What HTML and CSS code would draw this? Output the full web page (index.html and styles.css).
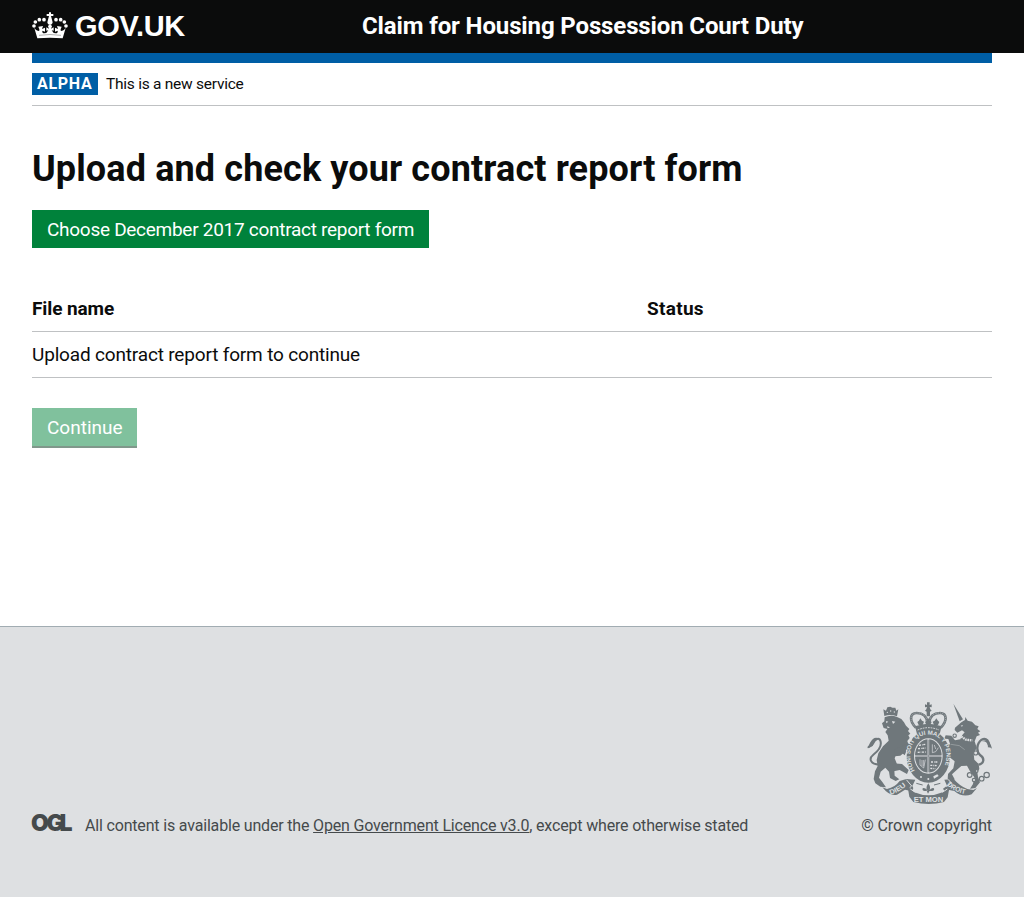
FILE: index.html
```html
<!DOCTYPE html>
<html lang="en">
<head>
<meta charset="utf-8">
<title>Claim for Housing Possession Court Duty</title>
<link rel="stylesheet" href="styles.css">
</head>
<body>
<header class="header">
  <div class="container header-inner">
    <div class="logo">
      <svg class="crown" viewBox="24 24 108 79" fill="#fff" aria-hidden="true">
        <circle cx="30" cy="65" r="5.5"/><circle cx="34" cy="53" r="5.5"/><circle cx="46" cy="46" r="5.5"/><circle cx="60" cy="46" r="5.5"/>
        <circle cx="96" cy="46" r="5.5"/><circle cx="110" cy="46" r="5.5"/><circle cx="121" cy="53" r="5.5"/><circle cx="126" cy="65" r="5.5"/>
        <path d="M75 24h6v5h7v6h-7l4 15c3 8-3 11-7 11s-10-3-7-11l4-15h-7v-6h7z"/>
        <circle cx="78" cy="65" r="5"/>
        <path d="M40 102 L31 71 Q36 79 43 80 Q48 80 46 75 L43 67 L57 65 L54 74 L63 70 L63 82 L55 79 Q54 87 61 87 Q69 87 73 78 L67 79 L67 69 L75 73 L72 65 H84 L81 73 L89 69 L89 79 L83 78 Q87 87 95 87 Q102 87 101 79 L93 82 L93 70 L102 74 L99 65 L113 67 L110 75 Q108 80 113 80 Q120 79 125 71 L116 102 Q78 98 40 102Z"/>
        <path d="M45 93Q78 88 111 93" fill="none" stroke="#0b0c0c" stroke-width="1"/>
      </svg>
      <span class="logo-text">GOV.UK</span>
    </div>
    <div class="service">Claim for Housing Possession Court Duty</div>
  </div>
</header>
<main class="container main">
  <div class="bar"></div>
  <div class="phase"><strong class="tag">ALPHA</strong><span class="phase-text">This is a new service</span></div>
  <h1 class="title">Upload and check your contract report form</h1>
  <button class="button choose"><span class="choose-text">Choose December 2017 contract report form</span></button>
  <div class="table">
    <div class="row head"><span class="file">File name</span><span class="status">Status</span></div>
    <div class="row"><span class="empty">Upload contract report form to continue</span></div>
  </div>
  <button class="button continue" disabled><span class="continue-text">Continue</span></button>
</main>
<footer class="footer">
  <div class="container footer-inner">
    <div class="licence">
      <svg class="ogl" viewBox="0 0 41 18" role="img" aria-label="OGL"><text class="ogl-text" x="-0.9 14.6 27.6" y="17">OGL</text></svg>
      <span class="licence-text">All content is available under the <a href="#">Open Government Licence v3.0</a>, except where otherwise stated</span>
    </div>
    <div class="copyright">
      <svg class="crest" viewBox="21 21 375 306" fill="#6f777b" stroke="#6f777b" stroke-width="0" aria-hidden="true">
        <!-- lion -->
        <path d="M73 63L70 43L78 47L82 37L91 35L97 38L106 38L109 47L115 43L111 64Q92 57 73 63Z"/>
        <g fill="#dee0e2"><circle cx="82" cy="52" r="2"/><circle cx="92" cy="48" r="2"/><circle cx="103" cy="51" r="2"/></g>
        <path d="M74 67Q92 58 111 66L124 72L132 82L138 92L148 102L144 108L151 116L145 121L149 129L142 138L146 151L133 158L139 169L134 181L122 170L109 177L104 190L112 210L103 226L104 242L118 253L107 258L90 249L87 230L76 218L62 230L57 248L67 261L78 277L61 275L46 265L41 252L45 229L53 213L50 195L55 175L69 154L86 137L83 121L76 111L82 102L71 99L66 85L73 79Z"/>
        <path d="M96 78l10 2-7 7zM78 78l7 2-6 5zM81 94l9 3-7 3z" fill="#dee0e2"/>
        <path d="M57 209C31 207 25 191 40 179C58 165 66 151 61 137C57 126 45 133 40 144C37 151 29 153 24 158" fill="none" stroke-width="6"/>
        <path d="M31 142Q40 124 54 129Q42 138 38 153L22 160Z"/>
        <path d="M105 163L132 151L144 143L150 151L132 173L121 182L104 184ZM98 205L126 207L146 225L141 237L119 225L101 229Z"/>
        <!-- unicorn -->
        <path d="M280 26L309 73L299 79Z"/>
        <path d="M304 82L315 75L316 66L323 77L336 80L346 91L356 94L352 102L361 109L354 113L360 120L350 124L344 139L350 158L341 176L343 194L356 207L358 222L352 232L354 246L360 262L346 279L330 281L339 267L343 247L330 229L321 212L304 213L290 225L276 238L284 253L278 259L263 251L264 237L280 220L284 199L269 187L265 171L253 160L258 145L271 149L265 132L253 131L257 121L274 122L285 136L301 133L307 120L314 112L306 106L292 113L284 105L285 98Z"/>
        <path d="M298 121L318 134L337 136" fill="none" stroke="#dee0e2" stroke-width="7" stroke-dasharray="5 2"/>
        <path d="M302 92l7-2-3 5z" fill="#dee0e2"/>
        <path d="M356 209C373 205 374 190 361 181C347 169 350 145 365 134C379 126 389 140 387 157" fill="none" stroke-width="7"/>
        <path d="M366 139Q388 127 396 161L384 152Q380 137 366 139Z"/>
        <path d="M273 148L298 152L314 164" fill="none" stroke="#dee0e2" stroke-width="1"/>
        <g fill="#dee0e2" stroke-width="3.5"><circle cx="284" cy="122" r="5"/><circle cx="329" cy="240" r="7"/><circle cx="342" cy="255" r="5"/><circle cx="365" cy="251" r="7"/><circle cx="380" cy="240" r="8"/><circle cx="347" cy="174" r="6"/><circle cx="350" cy="228" r="4"/></g>
        <!-- royal crown -->
        <path d="M166 96C148 78 148 54 170 53Q190 53 201 66H209Q220 53 240 53C262 54 262 78 244 96Z" fill="#dee0e2"/>
        <path d="M168 98C147 78 149 54 170 54C190 54 200 64 202 82M242 98C263 78 261 54 240 54C220 54 210 64 208 82" fill="none" stroke-width="8"/>
        <path d="M168 98C147 78 149 54 170 54C190 54 200 64 202 82M242 98C263 78 261 54 240 54C220 54 210 64 208 82" fill="none" stroke="#dee0e2" stroke-width="2" stroke-dasharray="2 3.5"/>
        <path d="M201 22h8v8l6-2v9l-6-1 2 7 4 4-5 3v14h-10V50l-5-3 4-4 2-7-6 1v-9l6 2z"/>
        <path d="M181 70l5 7 6 3-4 10h-12l-4-9 5-4zM229 70l5 7 4 4-4 9h-12l-4-10 6-3zM205 70l5 8 5 3-4 8h-12l-4-8 5-3z"/>
        <path d="M165 94Q205 78 245 94L239 117Q205 102 171 117Z"/>
        <path d="M173 105Q205 91 237 105" fill="none" stroke="#dee0e2" stroke-width="3" stroke-dasharray="5 3"/>
        <!-- shield and garter -->
        <ellipse cx="205" cy="184" rx="65" ry="79"/>
        <ellipse cx="205" cy="183" rx="43" ry="53" fill="#dee0e2"/>
        <ellipse cx="205" cy="183" rx="40" ry="50"/>
        <path d="M205 132V234M164 183H246" fill="none" stroke="#dee0e2" stroke-width="5"/>
        <path d="M205 134V232M166 183H244" fill="none" stroke-width="2"/>
        <path d="M177 151l19-3M174 161l23-2M173 172l24-1M213 201l20 0M211 211l21 1M211 220l15 1" fill="none" stroke="#dee0e2" stroke-width="4" stroke-dasharray="6 3 2 2"/>
        <path d="M217 148v25l10-3 8-12M223 150l4 12M180 193v17l11 9 5-25M186 195v18M191 195v19" fill="none" stroke="#dee0e2" stroke-width="2"/>
        <path id="motto" d="M165 228C137 187 150 119 205 119C260 119 273 187 245 228" fill="none"/>
        <text class="garter-text"><textPath href="#motto" textLength="264" lengthAdjust="spacingAndGlyphs" startOffset="1">HONI SOIT QUI MAL Y PENSE</textPath></text>
        <g fill="#dee0e2"><circle cx="183" cy="246" r="3"/><circle cx="205" cy="252" r="3"/><path d="M220 244l12-6 4 5-14 8z"/></g>
        <!-- ribbon and plant -->
        <path d="M67 277L81 282Q105 277 119 258L139 252L166 254L157 273Q164 283 153 288L135 284L111 299Q89 305 67 277ZM253 254L281 252Q299 273 322 282L340 285L351 279L335 298Q307 309 283 288L268 285L257 293L249 281L261 272Z"/>
        <path d="M143 275L163 292Q205 310 248 292L269 274L263 307L252 321Q207 333 160 321L148 305Z"/>
        <path d="M151 282L167 292M262 282L247 292M139 254L155 273L149 278M265 254L274 264L259 275" fill="none" stroke="#dee0e2" stroke-width="3"/>
        <path d="M168 263Q205 273 243 263L240 288Q205 304 171 288Z" fill="#dee0e2"/>
        <path d="M205 265Q194 280 204 296Q216 280 205 265ZM202 287Q185 291 188 280Q196 277 203 287ZM208 287Q225 291 222 280Q214 277 207 287Z"/>
        <path d="M169 265L188 270M241 265L222 270" fill="none" stroke-width="3"/>
        <text class="ribbon-text" x="161" y="320" textLength="89" lengthAdjust="spacingAndGlyphs">ET MON</text>
        <path id="dieu" d="M91 299Q121 292 143 267" fill="none"/><text class="ribbon-text"><textPath href="#dieu" textLength="55" lengthAdjust="spacingAndGlyphs">DIEU</textPath></text>
        <path id="droit" d="M260 270Q287 295 324 298" fill="none"/><text class="ribbon-text"><textPath href="#droit" textLength="62" lengthAdjust="spacingAndGlyphs">DROIT</textPath></text>
      </svg>
      <span class="copy-text">© Crown copyright</span>
    </div>
  </div>
</footer>
</body>
</html>
```
FILE: styles.css
```css
* { box-sizing: border-box; }
body { margin: 0; background: #fff; color: #0b0c0c; font-family: Roboto, "Noto Sans", sans-serif; font-size: 19px; -webkit-font-smoothing: antialiased; }
.container { width: 960px; margin: 0 auto; }
.header { height: 53px; background: #0b0c0c; color: #fff; }
.header-inner { display: flex; height: 53px; }
.logo { display: flex; width: 330px; padding-top: 12px; }
.crown { width: 36px; height: 27px; }
.logo-text { margin: -3px 0 0 7px; font: 700 29px/35px "Liberation Sans", Arial, sans-serif; letter-spacing: -0.3px; }
.service { padding-top: 10px; font-size: 24px; line-height: 32px; font-weight: 700; letter-spacing: -0.13px; white-space: nowrap; }
.main { height: 573px; }
.bar { height: 10px; background: #005ea5; }
.phase { display: flex; height: 43px; padding-top: 10px; border-bottom: 1px solid #bfc1c3; }
.tag { width: 66px; height: 22px; padding-left: 5px; background: #005ea5; color: #fff; font-size: 16px; line-height: 22px; letter-spacing: 0.7px; white-space: nowrap; }
.phase-text { margin-left: 8px; font-size: 15.5px; line-height: 22px; letter-spacing: -0.25px; white-space: nowrap; }
.title { margin: 43px 0 21px; font-size: 36px; line-height: 40px; font-weight: 700; letter-spacing: 0.12px; white-space: nowrap; }
.button { display: block; margin: 0; border: 0; padding: 2px 0 0 15px; background: #00823b; color: #fff; font: inherit; text-align: left; white-space: nowrap; }
.choose { width: 397px; height: 38px; line-height: 36px; letter-spacing: -0.28px; }
.table { margin-top: 38px; }
.row { display: flex; height: 46px; border-bottom: 1px solid #bfc1c3; line-height: 45px; white-space: nowrap; }
.head { font-weight: 700; }
.file { width: 615px; letter-spacing: -0.1px; }
.status { letter-spacing: 0.3px; }
.empty { letter-spacing: -0.17px; }
.continue { width: 105px; height: 40px; margin-top: 30px; border-bottom: 2px solid #80988b; background: #80c19d; line-height: 36px; }
.footer { height: 271px; border-top: 1px solid #a1acb2; background: #dee0e2; color: #454a4c; }
.footer-inner { display: flex; justify-content: space-between; padding-top: 75px; font-size: 16px; line-height: 22px; }
.licence { display: flex; padding-top: 112px; white-space: nowrap; }
.licence-text { padding-top: 1px; letter-spacing: -0.175px; }
.ogl { width: 41px; height: 18px; margin-right: 12px; fill: #454a4c; overflow: visible; }
.ogl-text { font: 900 23px Inter, sans-serif; }
.licence a { color: inherit; }
.copyright { display: flex; flex-direction: column; align-items: flex-end; white-space: nowrap; }
.crest { width: 125px; height: 102px; margin-bottom: 11px; }
.copy-text { letter-spacing: -0.1px; }
.garter-text { font: 700 18px "Liberation Sans", sans-serif; fill: #dee0e2; }
.ribbon-text { font: 700 21px "Liberation Sans", sans-serif; fill: #dee0e2; }
```
